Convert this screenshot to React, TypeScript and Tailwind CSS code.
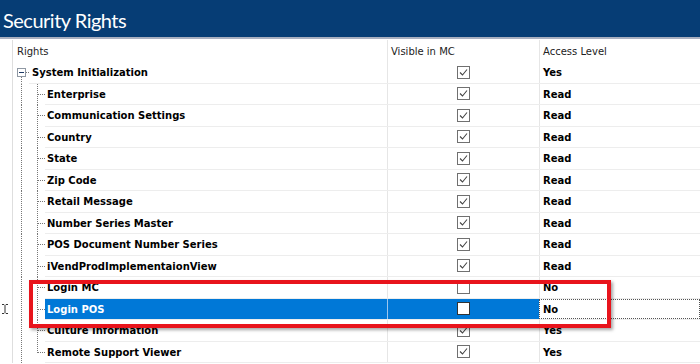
import React from 'react';

type Row = {
  name: string;
  level: 0 | 1;
  checked: boolean;
  access: string;
  selected?: boolean;
  last?: boolean;
};

const ROWS: Row[] = [
  { name: 'System Initialization', level: 0, checked: true, access: 'Yes' },
  { name: 'Enterprise', level: 1, checked: true, access: 'Read' },
  { name: 'Communication Settings', level: 1, checked: true, access: 'Read' },
  { name: 'Country', level: 1, checked: true, access: 'Read' },
  { name: 'State', level: 1, checked: true, access: 'Read' },
  { name: 'Zip Code', level: 1, checked: true, access: 'Read' },
  { name: 'Retail Message', level: 1, checked: true, access: 'Read' },
  { name: 'Number Series Master', level: 1, checked: true, access: 'Read' },
  { name: 'POS Document Number Series', level: 1, checked: true, access: 'Read' },
  { name: 'iVendProdImplementaionView', level: 1, checked: true, access: 'Read' },
  { name: 'Login MC', level: 1, checked: false, access: 'No' },
  { name: 'Login POS', level: 1, checked: false, access: 'No', selected: true },
  { name: 'Culture Information', level: 1, checked: true, access: 'Yes' },
  { name: 'Remote Support Viewer', level: 1, checked: true, access: 'Yes', last: true },
];

const H = 21.5;

function TreeGlyph({ level, last }: { level: 0 | 1; last?: boolean }) {
  if (level === 0) {
    return (
      <svg width={16} height={H} className="shrink-0">
        <rect x={4.5} y={6.5} width={8} height={8} fill="#fff" stroke="#8f98a3" />
        <line x1={6} y1={10.5} x2={11} y2={10.5} stroke="#1e3a66" />
        <line x1={13} y1={10.5} x2={16} y2={10.5} stroke="#777" strokeDasharray="1 1" />
        <line x1={8.5} y1={15} x2={8.5} y2={H} stroke="#777" strokeDasharray="1 1" />
      </svg>
    );
  }
  return (
    <svg width={32} height={H} className="shrink-0">
      <line x1={8.5} y1={0} x2={8.5} y2={H} stroke="#777" strokeDasharray="1 1" />
      <line x1={24.5} y1={0} x2={24.5} y2={last ? 11 : H} stroke="#777" strokeDasharray="1 1" />
      <line x1={25} y1={10.5} x2={32} y2={10.5} stroke="#777" strokeDasharray="1 1" />
    </svg>
  );
}

function CheckBox({ checked, selected }: { checked: boolean; selected?: boolean }) {
  return (
    <svg width={13} height={13}>
      <rect x={0.5} y={0.5} width={12} height={12} fill="#fff" stroke={selected ? '#333' : '#707070'} />
      {checked && <path d="M3 6.5 L5.5 9 L10 3.5" fill="none" stroke="#444" strokeWidth={1.1} />}
    </svg>
  );
}

function IBeam() {
  return (
    <svg width={6} height={10}>
      <path d="M0 0.5h2.2M3.8 0.5H6M3 1v8M0 9.5h2.2M3.8 9.5H6" fill="none" stroke="#333" />
    </svg>
  );
}

export default function App() {
  return (
    <div className="relative w-[700px] h-[364px] overflow-hidden bg-white font-['DejaVu_Sans',sans-serif]">
      <div className="h-[37px] bg-[#063d75] flex items-center pl-[3px] pt-[2px]">
        <span className="text-white text-[20px] tracking-[-0.5px] font-['Lato',sans-serif]">Security Rights</span>
      </div>
      <div className="h-[2px] bg-[#a9b0c0]" />
      <div className="h-[1px]" />

      <div className="flex h-[22px] text-[10px] text-[#222]">
        <div className="w-[13px] shrink-0 border-r border-[#dedede]" />
        <div className="flex-1 flex items-center pl-[4px]">Rights</div>
        <div className="w-[152px] shrink-0 border-l border-[#e6e6e6] flex items-center pl-[3px]">Visible in MC</div>
        <div className="w-[161px] shrink-0 border-l border-[#e6e6e6] flex items-center pl-[3px]">Access Level</div>
      </div>

      {ROWS.map((r) => (
        <div key={r.name} className="flex h-[21.5px] text-[10px] font-bold">
          <div className="w-[13px] shrink-0 border-r border-[#dedede] flex items-center pl-[2px]">
            {r.selected && <IBeam />}
          </div>
          <TreeGlyph level={r.level} last={r.last} />
          <div className="flex flex-1 border-b border-[#ededed]">
            <div
              className={`flex-1 flex items-center pt-[1px] ${r.level === 0 ? 'pl-[3px]' : 'pl-[2px]'} ${
                r.selected ? 'bg-[#0078d7] text-white' : 'text-black'
              }`}
            >
              {r.name}
            </div>
            <div
              className={`w-[152px] shrink-0 border-l flex items-center justify-center ${
                r.selected ? 'bg-[#0078d7] border-[#9cc6ee]' : 'border-[#e6e6e6]'
              }`}
            >
              <CheckBox checked={r.checked} selected={r.selected} />
            </div>
            <div
              className={`w-[161px] shrink-0 flex items-center pl-[3px] pt-[1px] text-black ${
                r.selected ? 'border border-dotted border-[#555]' : 'border-l border-[#e6e6e6]'
              }`}
            >
              {r.access}
            </div>
          </div>
        </div>
      ))}

      <div className="absolute left-[29px] top-[280px] w-[582px] h-[48px] border-[4px] border-[#e8141c] shadow-[2px_2px_3px_rgba(0,0,0,0.35)]" />
    </div>
  );
}
